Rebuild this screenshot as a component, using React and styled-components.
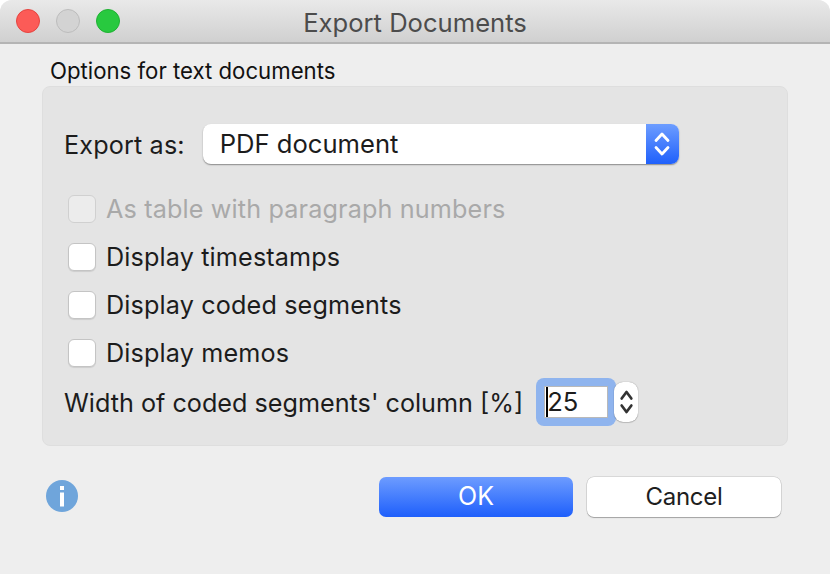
import React from "react";
import styled, { createGlobalStyle } from "styled-components";

const Global = createGlobalStyle`
  html, body { margin: 0; padding: 0; width: 830px; height: 574px; overflow: hidden; background: #fff; }
  * { box-sizing: border-box; }
`;
const Window = styled.div`
  width: 830px; height: 574px; background: #eeeeee; border-radius: 12px 12px 0 0;
  overflow: hidden; display: flex; flex-direction: column;
  font-family: Inter, "Liberation Sans", sans-serif; color: #1c1c1c; font-size: 25px;
`;
const TitleBar = styled.div`
  height: 44px; flex: none; display: flex; align-items: center; position: relative;
  padding-left: 16px; gap: 16px;
  background: linear-gradient(#e9e9e9, #d0d0d0); border-bottom: 2px solid #b4b4b4;
`;
const Light = styled.span`
  width: 24px; height: 24px; border-radius: 50%; background: ${p => p.$bg}; border: 1px solid ${p => p.$bd};
`;
const Title = styled.div`
  position: absolute; left: 0; right: 0; top: 7px; text-align: center;
  font-size: 25.6px; line-height: 32px; color: #4c4c4c;
`;
const Body = styled.div`
  padding: 13px 42px 0; display: flex; flex-direction: column; flex: 1;
`;
const Legend = styled.div`
  padding-left: 8px; font-size: 22.2px; line-height: 28px; color: #111; height: 29px;
`;
const Panel = styled.div`
  width: 746px; height: 360px; background: #e4e4e4; border: 1px solid #dedede; border-radius: 8px;
  padding: 37px 22px 0 21px; display: flex; flex-direction: column;
`;
const SelectRow = styled.div`
  display: flex; align-items: center; gap: 18px; height: 40px; margin-bottom: 21px;
`;
const Label = styled.span`
  font-size: 25.2px; line-height: 32px; color: ${p => p.$off ? "#a9a9a9" : "#1c1c1c"}; white-space: nowrap;
  letter-spacing: ${p => p.$wide ? "0.14px" : "0"};
  padding-top: ${p => p.$low ? "2px" : "0"};
`;
const Select = styled.div`
  width: 476px; height: 40px; background: #fff; border-radius: 8px; display: flex; align-items: center;
  justify-content: space-between; padding-left: 17px; overflow: hidden; font-size: 25.6px;
  box-shadow: 0 1px 1.5px rgba(0,0,0,.4);
`;
const SelectText = styled.span`
  padding-bottom: 2px;
`;
const Stepper = styled.span`
  width: 33px; height: 40px; background: linear-gradient(#6d9dff, #1f60fb);
  display: flex; align-items: center; justify-content: center;
`;
const CheckRow = styled.div`
  display: flex; align-items: center; gap: 10px; height: 48px; padding-left: 4px;
`;
const Box = styled.span`
  width: 28px; height: 28px; border-radius: 6px; flex: none;
  background: ${p => p.$off ? "#ececec" : "#fff"}; border: 1px solid ${p => p.$off ? "#d0d0d0" : "#c4c4c4"};
  box-shadow: ${p => p.$off ? "none" : "0 1px 1px rgba(0,0,0,.1)"};
`;
const WidthRow = styled.div`
  display: flex; align-items: center; height: 48px; margin-top: 1px;
`;
const NumberField = styled.div`
  margin-left: 13px; width: 80px; height: 48px; background: #8fb4ee; border-radius: 8px; padding: 8px;
`;
const NumberInner = styled.div`
  width: 64px; height: 32px; background: #fff; border: 1px solid #b9b9b9; display: flex; align-items: center;
  padding-left: 1px; font-size: 25.6px; line-height: 30px;
`;
const Caret = styled.span`
  width: 2px; height: 30px; background: #000; margin-right: -1px; flex: none;
`;
const SmallStepper = styled.span`
  margin-left: -2px; width: 24px; height: 40px; background: #fff; border-radius: 9px;
  box-shadow: 0 0 1px rgba(0,0,0,.45), 0 1px 1px rgba(0,0,0,.15);
  display: flex; align-items: center; justify-content: center;
`;
const Footer = styled.div`
  display: flex; align-items: center; margin-top: 31px; height: 40px; padding-left: 4px;
`;
const Info = styled.svg`
  width: 32px; height: 32px; flex: none; margin-bottom: 2px;
`;
const Buttons = styled.div`
  margin-left: auto; margin-right: 7px; display: flex; gap: 14px;
`;
const Button = styled.button`
  width: 194px; height: 40px; border-radius: 7px; padding: 0 0 2px; border: none;
  font-family: inherit; font-size: ${p => p.$primary ? "25px" : "24px"};
  letter-spacing: ${p => p.$primary ? "0" : "-0.3px"};
  background: ${p => p.$primary ? "linear-gradient(#6d9cff, #1e5ffb)" : "#fff"};
  color: ${p => p.$primary ? "#fff" : "#1e1e1e"};
  box-shadow: ${p => p.$primary ? "none" : "0 0 0 .5px rgba(0,0,0,.18), 0 1px 1px rgba(0,0,0,.25)"};
`;

const Chevrons = ({ color, w, h, sw }) => (
  <svg width={w} height={h} viewBox="0 0 16 26" preserveAspectRatio="none" fill="none" stroke={color} strokeWidth={sw} strokeLinecap="round" strokeLinejoin="round">
    <path d="M2 9.5 8 3l6 6.5" />
    <path d="M2 16.5 8 23l6-6.5" />
  </svg>
);

const items = ["Display timestamps", "Display coded segments", "Display memos"];

export default function App() {
  return (
    <Window>
      <Global />
      <TitleBar>
        <Light $bg="#fc5b57" $bd="#e5443f" />
        <Light $bg="#d3d3d3" $bd="#bcbcbc" />
        <Light $bg="#28c93f" $bd="#1fb133" />
        <Title>Export Documents</Title>
      </TitleBar>
      <Body>
        <Legend>Options for text documents</Legend>
        <Panel>
          <SelectRow>
            <Label $low $wide>Export as:</Label>
            <Select>
              <SelectText>PDF document</SelectText>
              <Stepper><Chevrons color="#fff" w={16} h={26} sw={2.8} /></Stepper>
            </Select>
          </SelectRow>
          <CheckRow>
            <Box $off />
            <Label $off $wide>As table with paragraph numbers</Label>
          </CheckRow>
          {items.map(t => (
            <CheckRow key={t}>
              <Box />
              <Label $wide>{t}</Label>
            </CheckRow>
          ))}
          <WidthRow>
            <Label $low>Width of coded segments' column [%]</Label>
            <NumberField>
              <NumberInner><Caret />25</NumberInner>
            </NumberField>
            <SmallStepper><Chevrons color="#333" w={13} h={26} sw={3} /></SmallStepper>
          </WidthRow>
        </Panel>
        <Footer>
          <Info viewBox="0 0 32 32">
            <circle cx="16" cy="16" r="16" fill="#6fa5db" />
            <rect x="14" y="6" width="4" height="4" fill="#fff" />
            <rect x="14" y="12.5" width="4" height="14" fill="#fff" />
          </Info>
          <Buttons>
            <Button $primary>OK</Button>
            <Button>Cancel</Button>
          </Buttons>
        </Footer>
      </Body>
    </Window>
  );
}
